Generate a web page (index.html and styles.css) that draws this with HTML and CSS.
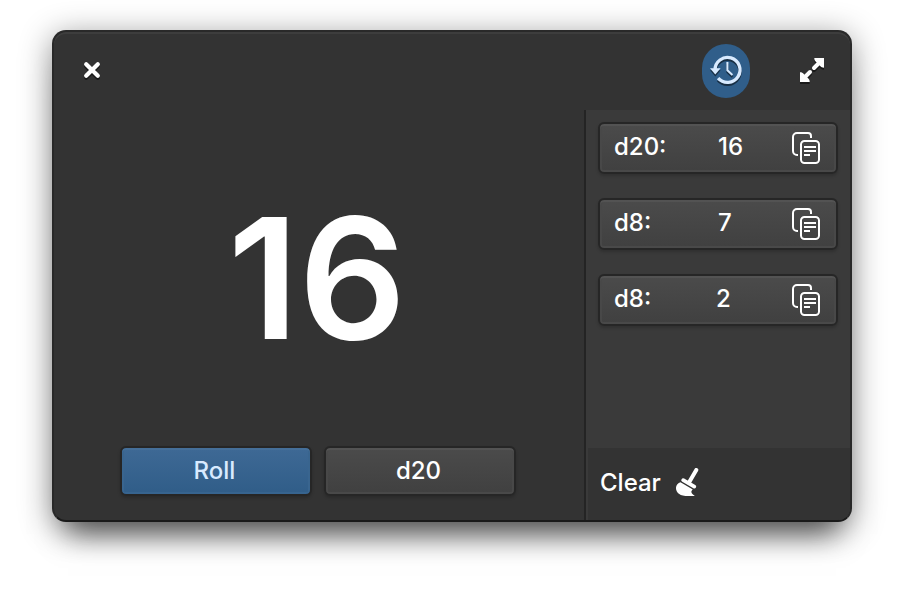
FILE: index.html
```html
<!DOCTYPE html>
<html lang="en">
<head>
<meta charset="utf-8">
<title>Roll-It</title>
<link rel="stylesheet" href="styles.css">
</head>
<body>
<svg class="defs" width="0" height="0">
  <symbol id="copy" viewBox="0 0 28 32">
    <g fill="none" stroke="#fff" stroke-width="2">
      <path d="M6 23H5a4 4 0 0 1-4-4V5a4 4 0 0 1 4-4h11a3 3 0 0 1 3 3v2"/>
      <rect x="9" y="9" width="18" height="22" rx="3.500"/>
      <path d="M12 15h12M12 19h12M12 23h6"/>
    </g>
  </symbol>
</svg>
<main class="window">
  <header class="titlebar">
    <button class="icon-button" aria-label="Close">
      <svg width="16" height="16" viewBox="0 0 16 16"><path d="M2.2 2.2l11.6 11.6M13.8 2.2L2.2 13.8" stroke="#fff" stroke-width="4.2" stroke-linecap="round"/></svg>
    </button>
    <div class="actions">
      <button class="icon-button history" aria-label="History">
        <svg width="32" height="30" viewBox="0 0 32 30">
          <path d="M5 15A12.5 12.5 0 1 1 8.1 23.2" fill="none" stroke="#d8eaff" stroke-width="3.3"/>
          <path d="M0 13.2h10.6L5.3 19.4z" fill="#d8eaff"/>
          <path d="M17.4 7v8.3l5 4.7" fill="none" stroke="#d8eaff" stroke-width="2"/>
        </svg>
      </button>
      <button class="icon-button" aria-label="Maximize">
        <svg width="24" height="24" viewBox="0 0 24 24">
          <path d="M14 10l6-6M10 14l-6 6" stroke="#fff" stroke-width="4" stroke-linecap="round"/>
          <path d="M14.300 0H24v9.700c-1.800 0-2.800-.6-3.800-1.600l-4.300-4.300C14.900 2.800 14.300 1.800 14.300 0zM9.700 24H0v-9.700c1.800 0 2.800.6 3.800 1.600l4.300 4.300c1 1 1.600 2 1.600 3.800z" fill="#fff"/>
        </svg>
      </button>
    </div>
  </header>
  <div class="content">
    <section class="roller">
      <div class="result">16</div>
      <div class="controls">
        <button class="button primary">Roll</button>
        <button class="button">d20</button>
      </div>
    </section>
    <aside class="sidebar">
      <div class="rolls">
        <button class="roll"><span>d20:</span><span>16</span><svg width="28" height="32"><use href="#copy"/></svg></button>
        <button class="roll"><span>d8:</span><span>7</span><svg width="28" height="32"><use href="#copy"/></svg></button>
        <button class="roll"><span>d8:</span><span class="two">2</span><svg width="28" height="32"><use href="#copy"/></svg></button>
      </div>
      <button class="clear"><span>Clear</span>
        <svg width="24" height="28" viewBox="0 0 24 28">
          <path d="M20.300 2L13 14.500" stroke="#fff" stroke-width="4" stroke-linecap="round"/>
          <path d="M7.200 12.200L18.300 18.600" stroke="#fff" stroke-width="3.800" stroke-linecap="round"/>
          <path d="M4.500 14.300L16.800 21.400C14.500 23 14.800 26 18.800 27.700C14 28.500 8 28.300 4.800 27C.5 25 0 22 0 19.600C.2 17 2 15 4.500 14.300z" fill="#fff"/>
        </svg>
      </button>
    </aside>
  </div>
</main>
</body>
</html>
```
FILE: styles.css
```css
* {
  box-sizing: border-box;
}

body {
  margin: 0;
  padding: 30px 52px;
  height: 600px;
  overflow: hidden;
  background: #fff;
  color: #fff;
  font: 450 24px/30px Inter, sans-serif;
}

button {
  margin: 0;
  padding: 0;
  border: 0;
  background: none;
  color: inherit;
  font: inherit;
}

svg {
  display: block;
  flex: none;
}

.defs {
  position: absolute;
}

.window {
  display: flex;
  flex-direction: column;
  width: 800px;
  height: 492px;
  border: 2px solid #292929;
  border-bottom-color: #1a1a1a;
  border-radius: 14px;
  overflow: hidden;
  background: #333;
  box-shadow: 0 28px 28px -16px rgba(0, 0, 0, 0.52), 0 6px 32px rgba(0, 0, 0, 0.44);
}

.titlebar {
  display: flex;
  align-items: flex-start;
  justify-content: space-between;
  height: 78px;
  padding: 12px 14px;
  border-radius: 12px 12px 0 0;
  box-shadow: inset 0 2px #3d3d3d;
}

.icon-button {
  display: grid;
  place-items: center;
  width: 48px;
  height: 52px;
}

.icon-button svg {
  overflow: visible;
  filter: drop-shadow(0 2px 0.5px rgba(0, 0, 0, 0.5));
}

.actions {
  display: flex;
  gap: 38px;
}

.history {
  height: 54px;
  border-radius: 24px;
  background: #305e8a;
}

.history svg {
  margin: -2px 0 0;
}

.content {
  display: flex;
  flex: 1;
  min-height: 0;
}

.roller {
  display: flex;
  flex-direction: column;
  align-items: center;
  width: 530px;
  padding: 0 2px 24px 0;
}

.result {
  flex: 1;
  display: flex;
  align-items: center;
  padding-right: 2px;
  font-size: 168px;
  font-weight: 600;
  line-height: 200px;
}

.controls {
  display: flex;
  gap: 12px;
}

.button,
.roll {
  border: 2px solid #262626;
  border-radius: 6px;
  background: linear-gradient(#4b4b4b, #404040) padding-box;
  box-shadow: inset 0 2px #535353, inset 0 -2px #494949, inset 2px 0 #484848, inset -2px 0 #484848, 0 2px 3px rgba(0, 0, 0, 0.18);
}

.button {
  width: 192px;
  height: 50px;
  padding-right: 3px;
}

.primary {
  color: #d8eaff;
  background: linear-gradient(#3e6995, #305d88) padding-box;
  box-shadow: inset 0 2px #456f99, inset 0 -2px #37648f, inset 2px 0 #39658f, inset -2px 0 #39658f, 0 2px 3px rgba(0, 0, 0, 0.18);
}

.sidebar {
  display: flex;
  flex-direction: column;
  flex: 1;
  border-left: 2px solid #242424;
  background: #3a3a3a;
}

.rolls {
  display: flex;
  flex: 1;
  flex-direction: column;
  gap: 24px;
  padding: 12px;
}

.roll {
  display: grid;
  grid-template-columns: 104px 74px 28px;
  align-items: center;
  height: 52px;
  padding: 0 14px;
  text-align: left;
}

.roll span {
  padding-bottom: 2px;
}

.roll .two {
  margin-left: -2px;
}

.clear {
  display: flex;
  align-items: center;
  gap: 15px;
  height: 72px;
  margin-left: 2px;
  padding: 0 12px 4px;
  background: #333;
}

.clear span {
  width: 61px;
  padding-top: 2px;
  text-align: left;
}
```
